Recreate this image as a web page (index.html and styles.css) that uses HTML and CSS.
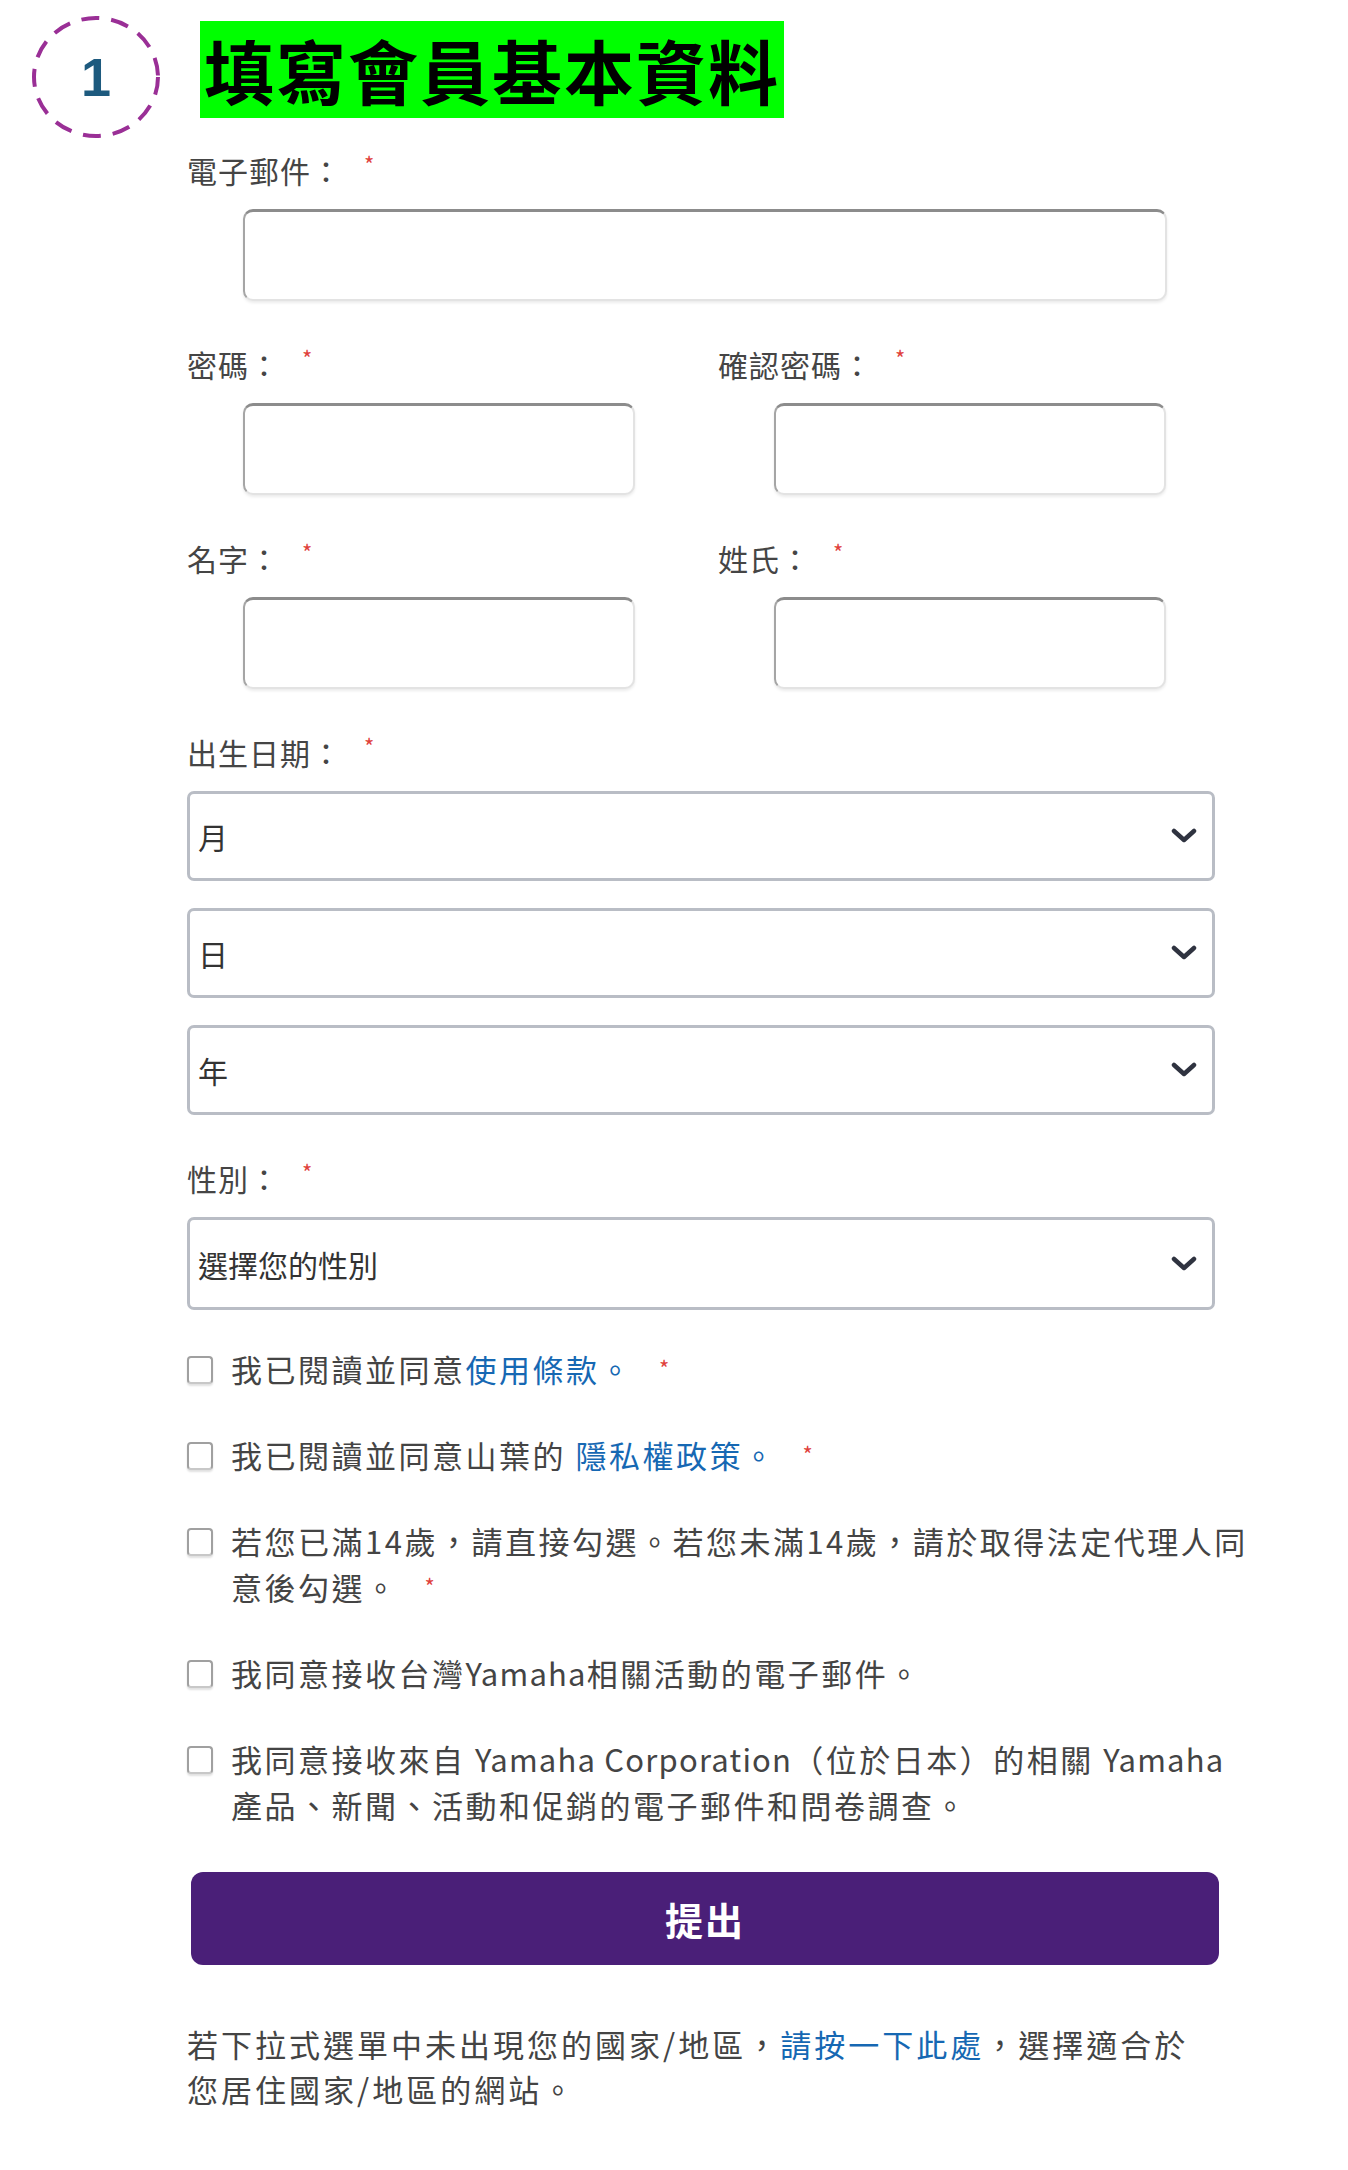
FILE: index.html
```html
<!DOCTYPE html>
<html lang="zh-Hant">
<head>
  <meta charset="UTF-8">
  <meta name="viewport" content="width=device-width, initial-scale=1.0">
  <title>填寫會員基本資料</title>
  <link rel="stylesheet" href="styles.css">
</head>
<body>
  <div class="page">
    <div class="step-header">
      <div class="step-badge">
        <svg width="132" height="126" viewBox="0 0 132 126">
          <ellipse cx="66" cy="63" rx="62" ry="59" fill="none" stroke="#9a2f96" stroke-width="4" stroke-dasharray="18 12"/>
        </svg>
        <span class="step-num">1</span>
      </div>
      <h1 class="step-title">填寫會員基本資料</h1>
    </div>

    <form class="signup-form">
      <div class="field">
        <label class="field-label">電子郵件：<span class="req">*</span></label>
        <input class="text-input wide" type="email">
      </div>

      <div class="field-row">
        <div class="field">
          <label class="field-label">密碼：<span class="req">*</span></label>
          <input class="text-input" type="password">
        </div>
        <div class="field">
          <label class="field-label">確認密碼：<span class="req">*</span></label>
          <input class="text-input" type="password">
        </div>
      </div>

      <div class="field-row">
        <div class="field">
          <label class="field-label">名字：<span class="req">*</span></label>
          <input class="text-input" type="text">
        </div>
        <div class="field">
          <label class="field-label">姓氏：<span class="req">*</span></label>
          <input class="text-input" type="text">
        </div>
      </div>

      <div class="field">
        <label class="field-label">出生日期：<span class="req">*</span></label>
        <div class="select-stack">
          <div class="select-box">
            <select><option>月</option></select>
            <svg class="chevron" width="26" height="16" viewBox="0 0 26 16"><path d="M3 3 L13 12 L23 3" fill="none" stroke="#2f3340" stroke-width="4.5" stroke-linecap="round" stroke-linejoin="round"/></svg>
          </div>
          <div class="select-box">
            <select><option>日</option></select>
            <svg class="chevron" width="26" height="16" viewBox="0 0 26 16"><path d="M3 3 L13 12 L23 3" fill="none" stroke="#2f3340" stroke-width="4.5" stroke-linecap="round" stroke-linejoin="round"/></svg>
          </div>
          <div class="select-box">
            <select><option>年</option></select>
            <svg class="chevron" width="26" height="16" viewBox="0 0 26 16"><path d="M3 3 L13 12 L23 3" fill="none" stroke="#2f3340" stroke-width="4.5" stroke-linecap="round" stroke-linejoin="round"/></svg>
          </div>
        </div>
      </div>

      <div class="field">
        <label class="field-label">性別：<span class="req">*</span></label>
        <div class="select-box tall">
          <select><option>選擇您的性別</option></select>
          <svg class="chevron" width="26" height="16" viewBox="0 0 26 16"><path d="M3 3 L13 12 L23 3" fill="none" stroke="#2f3340" stroke-width="4.5" stroke-linecap="round" stroke-linejoin="round"/></svg>
        </div>
      </div>

      <div class="checks">
        <label class="check-row">
          <span class="check-box"></span>
          <span class="check-text">我已閱讀並同意<a href="#">使用條款。</a><span class="req">*</span></span>
        </label>
        <label class="check-row">
          <span class="check-box"></span>
          <span class="check-text">我已閱讀並同意山葉的 <a href="#">隱私權政策。</a><span class="req">*</span></span>
        </label>
        <label class="check-row">
          <span class="check-box"></span>
          <span class="check-text">若您已滿14歲，請直接勾選。若您未滿14歲，請於取得法定代理人同意後勾選。<span class="req">*</span></span>
        </label>
        <label class="check-row">
          <span class="check-box"></span>
          <span class="check-text">我同意接收台灣<span class="latin">Yamaha</span>相關活動的電子郵件。</span>
        </label>
        <label class="check-row">
          <span class="check-box"></span>
          <span class="check-text">我同意接收來自 <span class="latin">Yamaha Corporation</span>（位於日本）的相關 <span class="latin">Yamaha</span> 產品、新聞、活動和促銷的電子郵件和問卷調查。</span>
        </label>
      </div>

      <button class="submit-btn" type="button">提出</button>

      <p class="note">若下拉式選單中未出現您的國家/地區，<a href="#">請按一下此處</a>，選擇適合於您居住國家/地區的網站。</p>
    </form>
  </div>
</body>
</html>
```

FILE: styles.css
```css
body {
  margin: 0;
  background: #fff;
  font-family: "Noto Sans CJK TC", "Noto Sans", sans-serif;
  color: #444;
}
.page {
  width: 1348px;
  min-height: 2170px;
}
.step-header {
  display: flex;
  align-items: flex-start;
  gap: 38px;
  padding: 14px 0 0 30px;
}
.step-badge {
  position: relative;
  width: 132px;
  height: 126px;
}
.step-badge svg {
  display: block;
}
.step-num {
  position: absolute;
  left: 0;
  top: 0;
  width: 100%;
  height: 100%;
  display: flex;
  align-items: center;
  justify-content: center;
  font-family: "Liberation Sans", Arial, sans-serif;
  font-weight: bold;
  font-size: 54px;
  color: #1d5a7e;
}
.step-title {
  margin: 7px 0 0;
  background: #00ff00;
  color: #000;
  font-size: 70px;
  font-weight: 700;
  line-height: 97px;
  letter-spacing: 2px;
  padding: 0 4px 0 4px;
  height: 97px;
}
.signup-form {
  padding: 10px 0 0 187px;
  width: 1028px;
}
.field {
  margin-bottom: 43px;
}
.field-label {
  display: block;
  font-size: 30px;
  line-height: 40px;
  letter-spacing: 1px;
  color: #454545;
  margin-bottom: 19px;
}
.req {
  position: relative;
  top: 2px;
  color: #e0413c;
  font-size: 22px;
  line-height: 1;
  vertical-align: top;
  margin-left: 22px;
}
.text-input {
  display: block;
  margin-left: 56px;
  width: 392px;
  height: 92px;
  box-sizing: border-box;
  border: 2px solid #e3e3e3;
  border-top: 3px solid #8c8c8c;
  border-left-color: #a5a5a5;
  border-radius: 10px;
  box-shadow: 0 2px 3px rgba(0, 0, 0, 0.08);
  background: #fff;
}
.text-input.wide {
  width: 924px;
}
.field-row {
  display: grid;
  grid-template-columns: 531px 1fr;
}
.select-stack {
  display: flex;
  flex-direction: column;
  gap: 27px;
}
.select-box {
  position: relative;
  width: 1028px;
  height: 90px;
}
.select-box.tall {
  height: 93px;
}
.select-box select {
  appearance: none;
  -webkit-appearance: none;
  width: 100%;
  height: 100%;
  box-sizing: border-box;
  border: 3px solid #b9bdc5;
  border-radius: 7px;
  background: #fff;
  padding: 0 0 0 8px;
  font-family: "Noto Sans CJK TC", sans-serif;
  font-size: 30px;
  color: #333;
}
.chevron {
  position: absolute;
  right: 18px;
  top: 50%;
  margin-top: -8px;
}
.checks {
  display: flex;
  flex-direction: column;
  gap: 40px;
  margin-top: -7px;
}
.check-row {
  display: flex;
  align-items: flex-start;
  gap: 18px;
}
.check-box {
  flex: none;
  width: 22px;
  height: 24px;
  margin-top: 10px;
  border: 2px solid #a0a0a0;
  border-bottom-color: #c8c8c8;
  border-radius: 4px;
  background: #fff;
  box-shadow: 0 2px 2px rgba(0, 0, 0, 0.12);
}
.check-text {
  flex: none;
  font-size: 31px;
  line-height: 46px;
  letter-spacing: 2.5px;
  color: #444;
  width: 1022px;
}
.check-text .latin {
  letter-spacing: 1.2px;
}
.check-text .req {
  top: 10px;
  margin-left: 26px;
}
a {
  color: #1668b3;
  text-decoration: none;
}
.submit-btn {
  display: block;
  margin: 44px 0 0 4px;
  width: 1028px;
  height: 93px;
  border: none;
  border-radius: 12px;
  background: #4a1f78;
  color: #fff;
  font-family: "Noto Sans CJK TC", sans-serif;
  font-size: 38px;
  font-weight: bold;
  letter-spacing: 2px;
  cursor: pointer;
}
.note {
  margin: 56px 0 0;
  width: 1010px;
  font-size: 31px;
  line-height: 45px;
  letter-spacing: 3px;
  color: #444;
}
```
